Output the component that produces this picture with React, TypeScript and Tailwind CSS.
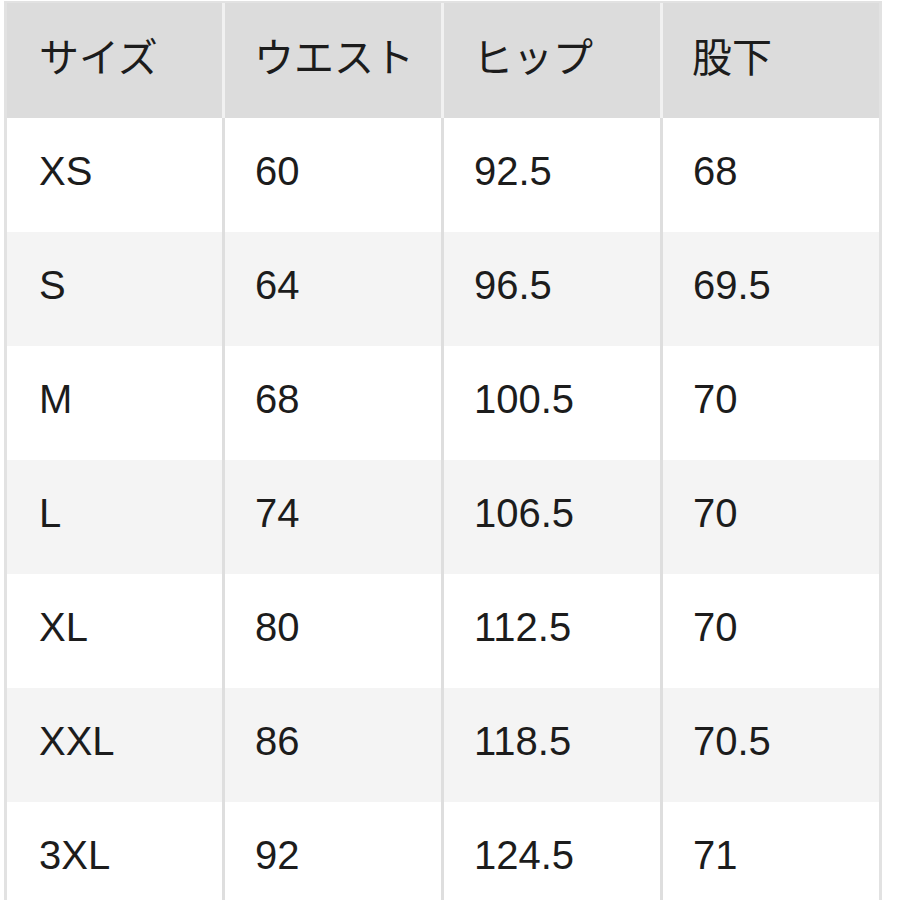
const header = ['サイズ', 'ウエスト', 'ヒップ', '股下']

const rows = [
  ['XS', '60', '92.5', '68'],
  ['S', '64', '96.5', '69.5'],
  ['M', '68', '100.5', '70'],
  ['L', '74', '106.5', '70'],
  ['XL', '80', '112.5', '70'],
  ['XXL', '86', '118.5', '70.5'],
  ['3XL', '92', '124.5', '71'],
]

export default function App() {
  return (
    <div className="h-[900px] w-[900px] overflow-hidden bg-white pt-px pl-1">
      <div className="w-[878px] border-x-[3px] border-t-2 border-[#e2e2e2] text-[#1c1c1c]">
        {/* Header */}
        <div className="flex h-[115px] bg-[#dcdcdc]">
          {header.map((h, i) => (
            <div
              key={h}
              className={`flex items-center pb-[12px] text-[40px] [font-family:'Noto_Sans_CJK_JP',sans-serif] ${i > 0 ? 'w-[219px] border-l-[3px] border-[#f1f1f1] pl-[29px]' : 'w-[215px] pl-[32px]'}`}
            >
              {h}
            </div>
          ))}
        </div>

        {/* Body */}
        {rows.map((r, ri) => (
          <div key={r[0]} className={`flex h-[114px] ${ri % 2 === 1 ? 'bg-[#f4f4f4]' : 'bg-white'}`}>
            {r.map((c, i) => (
              <div
                key={i}
                className={`flex items-center pb-[8px] text-[40px] [font-family:'Liberation_Sans',sans-serif] ${i > 0 ? 'w-[219px] border-l-[3px] border-[#dedede] pl-[30px]' : 'w-[215px] pl-[32px]'}`}
              >
                {c}
              </div>
            ))}
          </div>
        ))}
      </div>
    </div>
  )
}
